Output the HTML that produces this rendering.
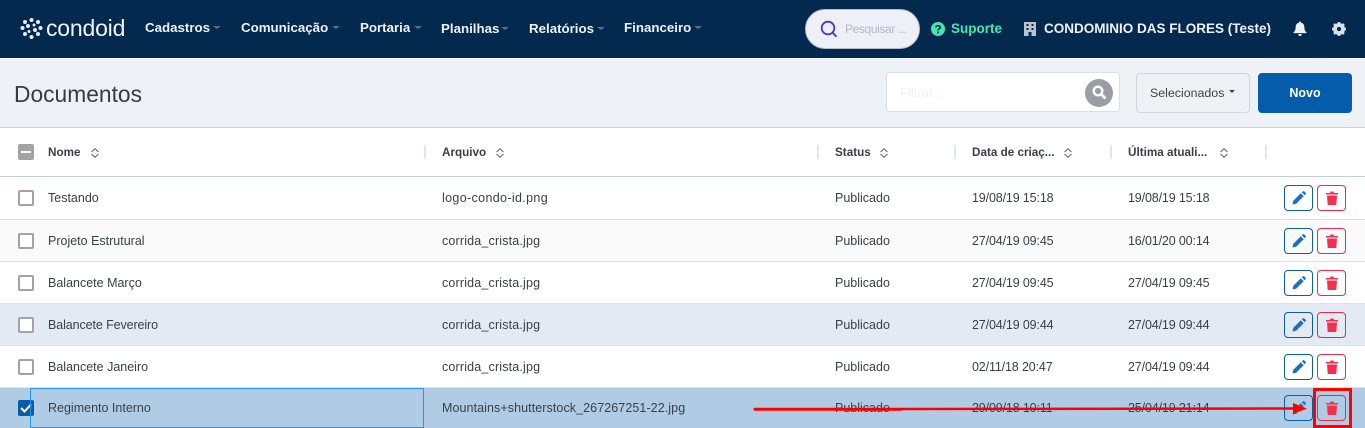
<!DOCTYPE html>
<html lang="pt"><head><meta charset="utf-8"><title>Documentos</title>
<style>
*{box-sizing:border-box}
html,body{margin:0;padding:0}
body{width:1365px;height:428px;overflow:hidden;position:relative;background:#fff;font-family:"Liberation Sans",sans-serif;color:#3a3f47;font-size:12.5px}
.a{position:absolute;white-space:nowrap}
.n{top:19px;line-height:18px;font-weight:bold;font-size:13.3px;color:#eef2f8}
.c{position:absolute;width:0;height:0;border-left:4px solid transparent;border-right:4px solid transparent;border-top:3px solid #5b6f86}
.r{position:absolute;left:0;width:1365px;border-bottom:1px solid #dde3ec}
.t{position:absolute;white-space:nowrap;line-height:16px}
.f{letter-spacing:.17px}
.d{letter-spacing:-.14px}
.h{top:145px;font-weight:bold;font-size:11.7px;color:#3a3f47;line-height:16px}
.s{position:absolute;top:145px;width:2px;height:14px;background:#dfe5ee}
.cb{position:absolute;left:18px;width:16px;height:16px;border:2px solid #a3a3a3;border-radius:2px;background:#fff}
.be{position:absolute;left:1284px;width:29px;height:26px;border:1px solid #0b5cab;border-radius:4px}
.bd{position:absolute;left:1317px;width:29px;height:26px;border:1px solid #f0284a;border-radius:4px}
svg{position:absolute;display:block}
</style></head><body>
<div class="a" style="left:0;top:0;width:1365px;height:58px;background:#03294f"></div>

<svg style="left:20px;top:17px" width="23" height="23" viewBox="0 0 23 23" fill="#e6ebf1"><circle cx="11.5" cy="3" r="2"/><circle cx="5" cy="5" r="2"/><circle cx="18" cy="5" r="2"/><circle cx="2.5" cy="11" r="2"/><circle cx="20.5" cy="11" r="2"/><circle cx="5" cy="17" r="2"/><circle cx="18" cy="17" r="2"/><circle cx="11.5" cy="20" r="2"/><circle cx="8" cy="9" r="2"/><circle cx="14" cy="8" r="1.5"/><circle cx="15" cy="13" r="2"/><circle cx="9" cy="14.500" r="1.500"/></svg>
<div class="a" style="left:46px;top:12px;font-size:23px;line-height:32px;color:#f0f3f7;letter-spacing:-.2px">condoid</div>

<div class="a n" style="left:145px">Cadastros</div><div class="c" style="left:213px;top:26px"></div>
<div class="a n" style="left:241px">Comunicação</div><div class="c" style="left:332px;top:26px"></div>
<div class="a n" style="left:360px">Portaria</div><div class="c" style="left:414px;top:26px"></div>
<div class="a n" style="left:441px;top:20px">Planilhas</div><div class="c" style="left:501px;top:27px"></div>
<div class="a n" style="left:529px;top:20px">Relatórios</div><div class="c" style="left:597px;top:27px"></div>
<div class="a n" style="left:624px">Financeiro</div><div class="c" style="left:694px;top:26px"></div>

<div class="a" style="left:805px;top:9px;width:115px;height:40px;border-radius:20px;background:#eef0f7;border:1px solid #b9bccb"></div>
<svg style="left:820px;top:20px" width="18" height="18" viewBox="0 0 18 18" fill="none" stroke="#4433d6" stroke-width="1.800"><circle cx="8" cy="8" r="6.300"/><path d="M12.500 12.500L16.500 16.800"/></svg>
<div class="a" style="left:845px;top:21px;line-height:16px;font-size:12px;letter-spacing:-.38px;color:#b4b7c9">Pesquisar ...</div>

<svg style="left:931px;top:22px" width="14" height="14" viewBox="0 0 14 14"><circle cx="7" cy="7" r="7" fill="#43e6b0"/><path d="M4.800 5.400C4.800 3.300 9.300 3.100 9.300 5.400C9.300 7 7 6.800 7 8.300" fill="none" stroke="#03294f" stroke-width="1.600"/><rect x="6.100" y="9.600" width="1.800" height="1.800" fill="#03294f"/></svg>
<div class="a" style="left:951px;top:20px;line-height:18px;font-weight:bold;font-size:13.500px;color:#45e8b2">Suporte</div>

<svg style="left:1024px;top:22px" width="12" height="14" viewBox="0 0 12 14"><rect width="12" height="14" fill="#b9c4cf"/><g fill="#03294f"><rect x="2.500" y="2" width="2" height="2"/><rect x="7.500" y="2" width="2" height="2"/><rect x="2.500" y="6" width="2" height="2"/><rect x="7.500" y="6" width="2" height="2"/><rect x="4.500" y="10" width="3" height="4"/></g></svg>
<div class="a" style="left:1044px;top:20px;line-height:18px;font-weight:bold;font-size:13.500px;color:#eef2f8">CONDOMINIO DAS FLORES (Teste)</div>

<svg style="left:1293px;top:21px" width="14" height="15" viewBox="0 0 15 16" fill="#eef2f8"><path d="M7.500 0.500C8.300 0.500 8.600 1 8.600 1.700C11 2.300 12.200 4.200 12.200 6.500C12.200 9.500 13 10.800 14.500 12.300V13H0.500V12.300C2 10.800 2.800 9.500 2.800 6.500C2.800 4.200 4 2.300 6.400 1.700C6.400 1 6.700 0.500 7.500 0.500Z"/><path d="M5.500 14H9.500C9.500 15.100 8.600 16 7.500 16S5.500 15.100 5.500 14Z"/></svg>
<svg style="left:1332px;top:22px" width="14" height="14" viewBox="0 0 14 14"><circle cx="7" cy="7" r="4.400" fill="none" stroke="#d9dfe6" stroke-width="3.200"/><path d="M7 0V14M0 7H14M2 2L12 12M12 2L2 12" stroke="#d9dfe6" stroke-width="2.400"/><circle cx="7" cy="7" r="2.100" fill="#03294f"/></svg>

<div class="a" style="left:0;top:58px;width:1365px;height:70px;background:#eef1f6;border-bottom:1px solid #c6d3e2"></div>
<div class="a" style="left:14px;top:80px;font-size:22.800px;line-height:28px;color:#333d49">Documentos</div>

<div class="a" style="left:886px;top:72px;width:234px;height:40px;background:#fff;border:1px solid #dcdfe6;border-radius:4px"></div>
<div class="a" style="left:900px;top:85px;line-height:16px;font-size:13px;color:#f0f0f2">Filtrar...</div>
<div class="a" style="left:1085px;top:79px;width:28px;height:28px;border-radius:50%;background:#9a9da3"></div>
<svg style="left:1092px;top:85px" width="15" height="15" viewBox="0 0 15 15" fill="none" stroke="#fff"><circle cx="6" cy="6" r="4.300" stroke-width="2.400"/><path d="M9.200 9.200L13.500 13.500" stroke-width="2.800"/></svg>

<div class="a" style="left:1136px;top:73px;width:114px;height:40px;background:#eef1f6;border:1px solid #d2d6de;border-radius:4px"></div>
<div class="a" style="left:1150px;top:85px;line-height:16px;font-size:12.400px;color:#3f444b">Selecionados</div>
<div class="c" style="left:1229px;top:90px;border-left-width:3.500px;border-right-width:3.500px;border-top-color:#3f444b"></div>
<div class="a" style="left:1258px;top:73px;width:94px;height:40px;background:#045cab;border-radius:4px;color:#fff;text-align:center;line-height:41px;font-weight:bold;font-size:12.500px">Novo</div>

<div class="r" style="top:128px;height:49px;border-bottom-color:#c3d0e0"></div>
<div class="cb" style="top:144px;background:#a3a3a3"></div><div class="a" style="left:21px;top:151px;width:10px;height:2px;background:#fff"></div>
<div class="a h" style="left:48px">Nome</div>
<div class="a h" style="left:442px">Arquivo</div>
<div class="a h" style="left:835px">Status</div>
<div class="a h" style="left:972px">Data de criaç...</div>
<div class="a h" style="left:1128px">Última atuali...</div>
<svg style="left:91px;top:148px" width="8" height="10" viewBox="0 0 8 10" fill="none" stroke="#5f646b"><path d="M.5 4L4 .7L7.500 4M.5 6L4 9.300L7.500 6"/></svg>
<svg style="left:496px;top:148px" width="8" height="10" viewBox="0 0 8 10" fill="none" stroke="#5f646b"><path d="M.5 4L4 .7L7.500 4M.5 6L4 9.300L7.500 6"/></svg>
<svg style="left:880px;top:148px" width="8" height="10" viewBox="0 0 8 10" fill="none" stroke="#5f646b"><path d="M.5 4L4 .7L7.500 4M.5 6L4 9.300L7.500 6"/></svg>
<svg style="left:1064px;top:148px" width="8" height="10" viewBox="0 0 8 10" fill="none" stroke="#5f646b"><path d="M.5 4L4 .7L7.500 4M.5 6L4 9.300L7.500 6"/></svg>
<svg style="left:1220px;top:148px" width="8" height="10" viewBox="0 0 8 10" fill="none" stroke="#5f646b"><path d="M.5 4L4 .7L7.500 4M.5 6L4 9.300L7.500 6"/></svg>
<div class="s" style="left:424px"></div><div class="s" style="left:817px"></div><div class="s" style="left:954px"></div><div class="s" style="left:1110px"></div><div class="s" style="left:1265px"></div>

<div class="r" style="top:177px;height:43px;background:#fff"></div>
<div class="r" style="top:220px;height:42px;background:#fafafa"></div>
<div class="r" style="top:262px;height:42px;background:#fff"></div>
<div class="r" style="top:304px;height:42px;background:#e3eaf4"></div>
<div class="r" style="top:346px;height:42px;background:#fff"></div>
<div class="r" style="top:388px;height:40px;background:#b0cce4;border:0"></div>

<div class="cb" style="top:190px"></div><div class="t" style="left:48px;top:190px">Testando</div><div class="t" style="left:442px;top:190px;letter-spacing:.35px">logo-condo-id.png</div><div class="t" style="left:835px;top:190px">Publicado</div><div class="t d" style="left:972px;top:190px">19/08/19 15:18</div><div class="t d" style="left:1128px;top:190px">19/08/19 15:18</div>
<div class="cb" style="top:233px"></div><div class="t" style="left:48px;top:233px">Projeto Estrutural</div><div class="t f" style="left:442px;top:233px">corrida_crista.jpg</div><div class="t" style="left:835px;top:233px">Publicado</div><div class="t d" style="left:972px;top:233px">27/04/19 09:45</div><div class="t d" style="left:1128px;top:233px">16/01/20 00:14</div>
<div class="cb" style="top:275px"></div><div class="t" style="left:48px;top:275px">Balancete Março</div><div class="t f" style="left:442px;top:275px">corrida_crista.jpg</div><div class="t" style="left:835px;top:275px">Publicado</div><div class="t d" style="left:972px;top:275px">27/04/19 09:45</div><div class="t d" style="left:1128px;top:275px">27/04/19 09:45</div>
<div class="cb" style="top:317px"></div><div class="t" style="left:48px;top:317px;letter-spacing:-.1px">Balancete Fevereiro</div><div class="t f" style="left:442px;top:317px">corrida_crista.jpg</div><div class="t" style="left:835px;top:317px">Publicado</div><div class="t d" style="left:972px;top:317px">27/04/19 09:44</div><div class="t d" style="left:1128px;top:317px">27/04/19 09:44</div>
<div class="cb" style="top:359px"></div><div class="t" style="left:48px;top:359px">Balancete Janeiro</div><div class="t f" style="left:442px;top:359px">corrida_crista.jpg</div><div class="t" style="left:835px;top:359px">Publicado</div><div class="t d" style="left:972px;top:359px">02/11/18 20:47</div><div class="t d" style="left:1128px;top:359px">27/04/19 09:44</div>
<div class="cb" style="top:400px;background:#045cab;border-color:#045cab"></div>
<svg style="left:20px;top:403px" width="12" height="10" viewBox="0 0 12 10" fill="none" stroke="#fff" stroke-width="2"><path d="M1 5L4.500 8.500L11 1.500"/></svg>
<div class="a" style="left:30px;top:388px;width:394px;height:40px;border:1px solid #2196f3"></div>
<div class="t" style="left:48px;top:400px">Regimento Interno</div><div class="t" style="left:442px;top:400px;letter-spacing:.08px">Mountains+shutterstock_267267251-22.jpg</div><div class="t" style="left:835px;top:400px">Publicado</div><div class="t d" style="left:972px;top:400px">29/09/18 10:11</div><div class="t d" style="left:1128px;top:400px">25/04/19 21:14</div>

<div class="be" style="top:185px"></div><div class="bd" style="top:185px"></div>
<div class="be" style="top:228px"></div><div class="bd" style="top:228px"></div>
<div class="be" style="top:270px"></div><div class="bd" style="top:270px"></div>
<div class="be" style="top:312px"></div><div class="bd" style="top:312px"></div>
<div class="be" style="top:354px"></div><div class="bd" style="top:354px"></div>
<div class="be" style="top:395px"></div><div class="bd" style="top:395px"></div>

<svg style="left:1292px;top:191px" width="14" height="14" viewBox="0 0 14 14" fill="#1f6fbf"><path d="M0.500 13.500L1.300 9.800L8.800 2.300L11.700 5.200L4.200 12.700ZM9.800 1.300L10.800 .4C11.200 0 11.800 0 12.200 .4L13.600 1.800C14 2.200 14 2.800 13.600 3.200L12.700 4.200Z"/></svg>
<svg style="left:1292px;top:234px" width="14" height="14" viewBox="0 0 14 14" fill="#1f6fbf"><path d="M0.500 13.500L1.300 9.800L8.800 2.300L11.700 5.200L4.200 12.700ZM9.800 1.300L10.800 .4C11.200 0 11.800 0 12.200 .4L13.600 1.800C14 2.200 14 2.800 13.600 3.200L12.700 4.200Z"/></svg>
<svg style="left:1292px;top:276px" width="14" height="14" viewBox="0 0 14 14" fill="#1f6fbf"><path d="M0.500 13.500L1.300 9.800L8.800 2.300L11.700 5.200L4.200 12.700ZM9.800 1.300L10.800 .4C11.200 0 11.800 0 12.200 .4L13.600 1.800C14 2.200 14 2.800 13.600 3.200L12.700 4.200Z"/></svg>
<svg style="left:1292px;top:318px" width="14" height="14" viewBox="0 0 14 14" fill="#1f6fbf"><path d="M0.500 13.500L1.300 9.800L8.800 2.300L11.700 5.200L4.200 12.700ZM9.800 1.300L10.800 .4C11.200 0 11.800 0 12.200 .4L13.600 1.800C14 2.200 14 2.800 13.600 3.200L12.700 4.200Z"/></svg>
<svg style="left:1292px;top:360px" width="14" height="14" viewBox="0 0 14 14" fill="#1f6fbf"><path d="M0.500 13.500L1.300 9.800L8.800 2.300L11.700 5.200L4.200 12.700ZM9.800 1.300L10.800 .4C11.200 0 11.800 0 12.200 .4L13.600 1.800C14 2.200 14 2.800 13.600 3.200L12.700 4.200Z"/></svg>
<svg style="left:1292px;top:401px" width="14" height="14" viewBox="0 0 14 14" fill="#1f6fbf"><path d="M0.500 13.500L1.300 9.800L8.800 2.300L11.700 5.200L4.200 12.700ZM9.800 1.300L10.800 .4C11.200 0 11.800 0 12.200 .4L13.600 1.800C14 2.200 14 2.800 13.600 3.200L12.700 4.200Z"/></svg>

<svg style="left:1325.500px;top:191px" width="12" height="14" viewBox="0 0 12 14" fill="#f5304f"><path d="M0 2H4L4.500 .5H7.500L8 2H12V3.500H0ZM1 4.500H11L10.300 14H1.700Z"/></svg>
<svg style="left:1325.500px;top:234px" width="12" height="14" viewBox="0 0 12 14" fill="#f5304f"><path d="M0 2H4L4.500 .5H7.500L8 2H12V3.500H0ZM1 4.500H11L10.300 14H1.700Z"/></svg>
<svg style="left:1325.500px;top:276px" width="12" height="14" viewBox="0 0 12 14" fill="#f5304f"><path d="M0 2H4L4.500 .5H7.500L8 2H12V3.500H0ZM1 4.500H11L10.300 14H1.700Z"/></svg>
<svg style="left:1325.500px;top:318px" width="12" height="14" viewBox="0 0 12 14" fill="#f5304f"><path d="M0 2H4L4.500 .5H7.500L8 2H12V3.500H0ZM1 4.500H11L10.300 14H1.700Z"/></svg>
<svg style="left:1325.500px;top:360px" width="12" height="14" viewBox="0 0 12 14" fill="#f5304f"><path d="M0 2H4L4.500 .5H7.500L8 2H12V3.500H0ZM1 4.500H11L10.300 14H1.700Z"/></svg>
<svg style="left:1325.500px;top:401px" width="12" height="14" viewBox="0 0 12 14" fill="#f5304f"><path d="M0 2H4L4.500 .5H7.500L8 2H12V3.500H0ZM1 4.500H11L10.300 14H1.700Z"/></svg>

<svg style="left:750px;top:400px" width="560" height="20" viewBox="0 0 560 20"><path d="M5 9.300L151 9.300" stroke="#f00" stroke-width="3" stroke-linecap="round"/><path d="M151 9L545 8.500" stroke="#f00" stroke-width="2.500"/><path d="M557 8.500L543 3V14Z" fill="#f00"/></svg>
<div class="a" style="left:1313px;top:388px;width:39px;height:40px;border:3px solid #f00"></div>
</body></html>
